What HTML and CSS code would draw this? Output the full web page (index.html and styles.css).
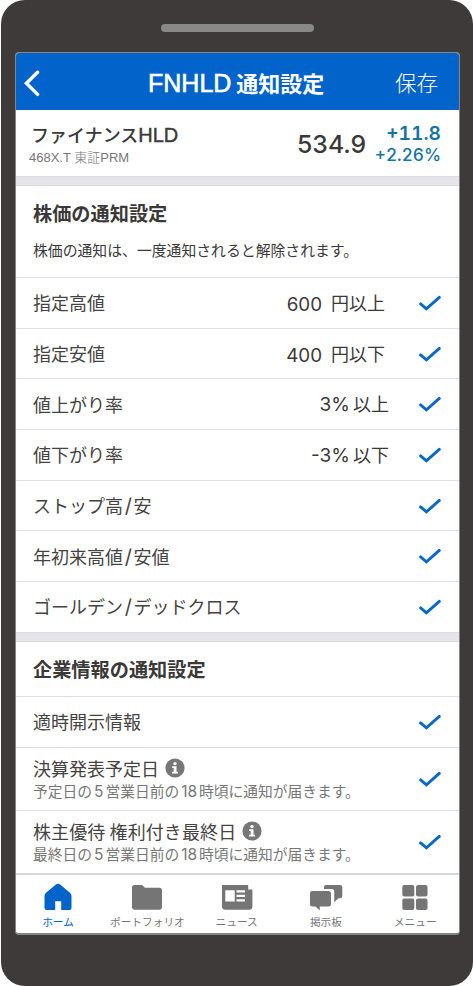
FILE: index.html
```html
<!DOCTYPE html>
<html lang="ja">
<head>
<meta charset="utf-8">
<title>FNHLD 通知設定</title>
<link rel="stylesheet" href="styles.css">
</head>
<body>
<svg class="defs" aria-hidden="true">
  <symbol id="check" viewBox="0 0 22 16"><path d="M1.6 8.9 L7.4 13.9 L20.300 2.400" fill="none" stroke="currentColor" stroke-width="2.900" stroke-linecap="round"/></symbol>
  <symbol id="info" viewBox="0 0 20 20"><circle cx="10" cy="10" r="9.6" fill="currentColor"/><circle cx="10" cy="5.6" r="1.7" fill="#fff"/><path d="M7.2 8.200h4.300v5.500h1.500v1.700H7v-1.700h1.700V9.900H7.2z" fill="#fff"/></symbol>
</svg>
<div class="phone">
  <div class="speaker"></div>
  <div class="screen">
    <header class="bar">
      <svg class="back" viewBox="0 0 16 27"><path d="M13.6 2.2 L2.4 13.3 L13.6 24.4" fill="none" stroke="#fff" stroke-width="3.4" stroke-linecap="round"/></svg>
      <h1><span class="latin">FNHLD</span><span class="cjk">通知設定</span></h1>
      <span class="save">保存</span>
    </header>
    <section class="stock">
      <div class="name"><b>ファイナンス<span>HLD</span></b><small>468X.T 東証PRM</small></div>
      <div class="price">534.9</div>
      <div class="change"><b>+11.8</b><span>+2.26%</span></div>
    </section>
    <div class="gap"></div>
    <section class="intro"><h2>株価の通知設定</h2><p>株価の通知は、一度通知されると解除されます。</p></section>
    <ul class="rows">
      <li><span class="label">指定高値</span><span class="num">600</span><span class="unit">円以上</span><svg class="check"><use href="#check"/></svg></li>
      <li><span class="label">指定安値</span><span class="num">400</span><span class="unit">円以下</span><svg class="check"><use href="#check"/></svg></li>
      <li><span class="label">値上がり率</span><span class="rate">3%<i>以上</i></span><svg class="check"><use href="#check"/></svg></li>
      <li><span class="label">値下がり率</span><span class="rate">-3%<i>以下</i></span><svg class="check"><use href="#check"/></svg></li>
      <li><span class="label">ストップ高<i>/</i>安</span><svg class="check"><use href="#check"/></svg></li>
      <li><span class="label">年初来高値<i>/</i>安値</span><svg class="check"><use href="#check"/></svg></li>
      <li><span class="label">ゴールデン<i>/</i>デッドクロス</span><svg class="check"><use href="#check"/></svg></li>
    </ul>
    <div class="gap"></div>
    <section class="intro short"><h2>企業情報の通知設定</h2></section>
    <ul class="rows company">
      <li><span class="label">適時開示情報</span><svg class="check"><use href="#check"/></svg></li>
      <li class="tall"><div class="label"><div class="topic">決算発表予定日<svg class="info"><use href="#info"/></svg></div><p>予定日の<i>5</i>営業日前の<i>18</i>時頃に通知が届きます。</p></div><svg class="check"><use href="#check"/></svg></li>
      <li class="tall"><div class="label"><div class="topic wide">株主優待 権利付き最終日<svg class="info"><use href="#info"/></svg></div><p>最終日の<i>5</i>営業日前の<i>18</i>時頃に通知が届きます。</p></div><svg class="check"><use href="#check"/></svg></li>
    </ul>
    <nav class="tabs">
      <a class="on"><svg viewBox="0 0 34 28"><path d="M15.2 1.3Q17 0 18.8 1.3L29 9.8Q30.5 11 30.5 13V25Q30.5 27 28.5 27H20.2V18.3H14.2V27H5.5Q3.5 27 3.5 25V13Q3.5 11 5 9.8Z"/></svg><span>ホーム</span></a>
      <a><svg viewBox="0 0 34 28"><path d="M4.500 2H12l3 2.800H29.300Q32 4.800 32 7.500V24Q32 26.800 29.300 26.800H4.700Q2 26.800 2 24V4.500Q2 2 4.500 2Z"/></svg><span>ポートフォリオ</span></a>
      <a><svg viewBox="0 0 34 28"><path fill-rule="evenodd" d="M2 2H28.200V6.500H32.400V23.500Q32.400 26.800 29 26.800H5.500Q2 26.800 2 23.500ZM5.300 7.300V18.500H14.700V7.300ZM16.500 7.300V9.500H25V7.300ZM16.500 11.800V14H25V11.800ZM16.500 16.300V18.500H25V16.300Z"/></svg><span>ニュース</span></a>
      <a><svg viewBox="0 0 34 28"><path d="M17 2H31Q33.300 2 33.300 4.300V13Q33.300 15.300 31 15.300H29.500L25.200 19.200V8.500Q25.200 6 22.700 6H15V4Q15 2 17 2Z"/><path d="M3.300 8H19.700Q22 8 22 10.300V21.200Q22 23.500 19.700 23.500H10.700V27.500L6.500 23.500H3.300Q1 23.500 1 21.200V10.300Q1 8 3.300 8Z"/></svg><span>掲示板</span></a>
      <a><svg viewBox="0 0 34 28"><rect x="4.300" y="2" width="12" height="11.500" rx="2"/><rect x="18" y="2" width="11.500" height="11.500" rx="2"/><rect x="4.300" y="15.500" width="12" height="11.500" rx="2"/><rect x="18" y="15.500" width="11.500" height="11.500" rx="2"/></svg><span>メニュー</span></a>
    </nav>
  </div>
</div>
</body>
</html>
```
FILE: styles.css
```css
* { box-sizing: border-box; margin: 0; padding: 0; }
i { font-style: normal; }
body { width: 473px; height: 986px; background: #fff; overflow: hidden; color: #3b3938; font-family: "Noto Sans CJK JP", sans-serif; }
.defs { display: none; }
.phone { width: 472px; height: 986px; margin-left: 1px; padding: 24px 0 0 14px; border-radius: 24px; background: #3e3a39; }
.speaker { width: 153px; height: 8px; margin: 0 0 20px 146px; border-radius: 4px; background: #898989; }
.screen { width: 445px; height: 883px; border: 1px solid #858585; border-bottom-width: 2px; border-radius: 4px; overflow: hidden; background: #fff; display: flex; flex-direction: column; }
.bar { flex: none; height: 57px; display: flex; align-items: center; background: #0264ca; color: #fff; padding: 3px 21px 0 8px; }
.back { width: 16px; height: 27px; }
h1 { display: flex; align-items: center; gap: 5px; margin-left: 108px; font-size: 22px; line-height: 32px; font-weight: 500; }
.latin { font-family: "Liberation Sans", sans-serif; font-size: 25px; -webkit-text-stroke: .6px; }
.cjk { font-weight: 700; padding-bottom: 3px; }
.save { margin-left: auto; padding-bottom: 2px; font-size: 21.500px; line-height: 32px; font-weight: 300; }
.stock { flex: none; height: 66px; display: flex; padding: 0 18px 0 13px; }
.name { width: 268px; padding-top: 11px; }
.name b { display: block; height: 27px; padding-left: 2px; font-size: 18px; line-height: 27px; font-weight: 500; }
.name b span { font-family: "Liberation Sans", sans-serif; font-size: 20px; -webkit-text-stroke: .4px; }
.name small { display: block; margin-top: 1px; font-family: "Liberation Sans", "Noto Sans CJK JP", sans-serif; font-size: 13px; line-height: 17px; font-weight: 300; color: #777; white-space: nowrap; }
.price { font: 500 24.800px/68px Inter, sans-serif; }
.change { margin-left: auto; padding-top: 12px; text-align: right; color: #1374a4; font-family: Inter, sans-serif; font-weight: 500; font-variant-numeric: tabular-nums; }
.change b { display: block; font-size: 19.200px; line-height: 22px; font-weight: 600; }
.change span { display: block; font-size: 17.200px; line-height: 22px; }
.gap { flex: none; height: 10px; background: #e5e4ea; border-top: 1px solid #dcdce0; border-bottom: 1px solid #dcdce0; }
.intro { flex: none; height: 91px; padding: 13px 17px 0; }
h2 { font-size: 19.200px; line-height: 28px; font-weight: 700; }
.intro p { margin-top: 12px; font-size: 14.850px; line-height: 22px; }
.short { height: 54px; padding-top: 13px; }
.rows { flex: none; list-style: none; }
.rows li { height: 50.700px; border-top: 1px solid #dfdfdf; display: flex; align-items: center; padding: 0 18px 0 17px; font-size: 18px; line-height: 26px; }
.label { flex: 1; padding-bottom: 1px; color: #454342; }
.label > i { font-family: Inter, sans-serif; font-size: 20px; line-height: 20px; margin: 0 1.700px; }
.num { font: 18.800px/24px Inter, sans-serif; margin: 4px 9px 0 0; }
.unit { margin-right: 34px; padding-bottom: 1px; }
.rate { font: 19px/24px Inter, sans-serif; margin-right: 30px; }
.rate i { font: 18px/24px "Noto Sans CJK JP", sans-serif; margin-left: 3px; }
.check { width: 22px; height: 16px; color: #0768cc; }
.rows .tall { height: 63.300px; }
.topic { display: flex; align-items: center; gap: 6px; height: 25px; line-height: 24px; }
.wide { letter-spacing: .1px; }
.info { width: 20px; height: 20px; color: #777; }
.tall .label { padding-bottom: 0; }
.tall p { font-size: 14.750px; line-height: 22px; color: #777; white-space: nowrap; }
.tall p i { font: 15.500px/20px Inter, sans-serif; margin: 0 2px; }
.tabs { flex: 1; min-height: 0; display: grid; grid-template-columns: repeat(5, 89.300px); border-top: 2px solid #d8d7db; margin-left: -2.600px; color: #757575; padding-top: 8px; }
.tabs a { display: flex; flex-direction: column; align-items: center; font-size: 10.700px; line-height: 16px; white-space: nowrap; }
.tabs svg { width: 34px; height: 28px; fill: currentColor; margin-bottom: 3px; }
.tabs .on { color: #0264ca; }
```
